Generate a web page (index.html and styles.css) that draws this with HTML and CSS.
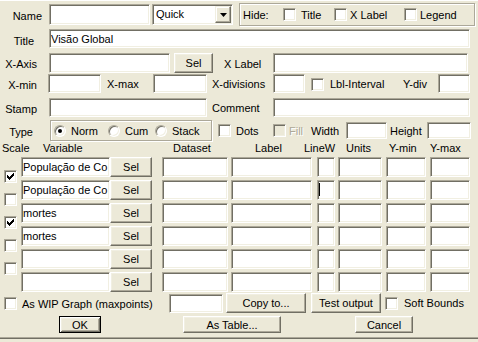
FILE: index.html
```html
<!DOCTYPE html>
<html lang="pt">
<head>
  <meta charset="UTF-8">
  <meta name="viewport" content="width=device-width, initial-scale=1.0">
  <title>Graph Settings</title>
  <link rel="stylesheet" href="styles.css">
</head>
<body>

  <div class="dialog">
    <div class="row row-name">
      <label class="lbl lbl-name">Name</label>
      <input class="field in-name" type="text">
      <div class="select">
        <span class="select-text">Quick</span>
        <span class="select-btn">
          <svg width="7" height="4" viewBox="0 0 7 4"><polygon points="0,0 7,0 3.5,4" fill="#000"/></svg>
        </span>
      </div>
      <div class="group hide-box">
        <span>Hide:</span>
        <span class="opt"><span class="chk"></span>Title</span>
        <span class="opt opt-tight"><span class="chk"></span>X Label</span>
        <span class="opt opt-tight"><span class="chk"></span>Legend</span>
      </div>
    </div>

    <div class="row row-title">
      <label class="lbl lbl-title">Title</label>
      <input class="field in-title" type="text" value="Visão Global">
    </div>

    <div class="row row-axis">
      <label class="lbl">X-Axis</label>
      <input class="field in-axis" type="text">
      <button class="btn btn-axis">Sel</button>
      <span class="txt t-xlabel">X Label</span>
      <input class="field in-xlabel" type="text">
    </div>

    <div class="row row-min">
      <label class="lbl lbl-min">X-min</label>
      <input class="field in-xmin" type="text">
      <span class="txt t-xmax">X-max</span>
      <input class="field in-xmax" type="text">
      <span class="txt t-xdiv">X-divisions</span>
      <input class="field in-xdiv" type="text">
      <span class="chk chk-lbl"></span>
      <span class="txt t-interval">Lbl-Interval</span>
      <span class="txt t-ydiv">Y-div</span>
      <input class="field in-ydiv" type="text">
    </div>

    <div class="row row-stamp">
      <label class="lbl">Stamp</label>
      <input class="field in-stamp" type="text">
      <span class="txt t-comment">Comment</span>
      <input class="field in-comment" type="text">
    </div>

    <div class="row row-type">
      <label class="lbl lbl-type">Type</label>
      <div class="group type-box">
        <span class="ropt r-norm"><span class="radio on"></span>Norm</span>
        <span class="ropt r-cum"><span class="radio"></span>Cum</span>
        <span class="ropt"><span class="radio"></span>Stack</span>
      </div>
      <span class="opt o-dots"><span class="chk"></span>Dots</span>
      <span class="opt o-fill disabled"><span class="chk"></span>Fill</span>
      <span class="txt t-width">Width</span>
      <input class="field in-width" type="text">
      <span class="txt t-height">Height</span>
      <input class="field in-height" type="text">
    </div>

    <div class="row row-head">
      <span class="h-scale">Scale</span>
      <span class="h-var">Variable</span>
      <span class="h-set">Dataset</span>
      <span class="h-lbl">Label</span>
      <span class="h-lw">LineW</span>
      <span class="h-units">Units</span>
      <span class="h-ymin">Y-min</span>
      <span>Y-max</span>
    </div>

    <div class="vars">
      <div class="row var-row">
        <span class="scale"><span class="chk"><svg width="7" height="7" viewBox="0 0 7 7"><polygon points="0,2 2,4 7,-1 7,2 2,7 0,5" fill="#000"/></svg></span></span>
        <input class="field c-var" type="text" value="População de Co">
        <button class="btn c-sel">Sel</button>
        <input class="field c-set" type="text">
        <input class="field c-label" type="text">
        <input class="field c-lw" type="text">
        <input class="field c-units" type="text">
        <input class="field c-ymin" type="text">
        <input class="field c-ymax" type="text">
      </div>
      <div class="row var-row">
        <span class="scale"><span class="chk"></span></span>
        <input class="field c-var" type="text" value="População de Co">
        <button class="btn c-sel">Sel</button>
        <input class="field c-set" type="text">
        <input class="field c-label" type="text">
        <input class="field c-lw has-caret" type="text">
        <input class="field c-units" type="text">
        <input class="field c-ymin" type="text">
        <input class="field c-ymax" type="text">
      </div>
      <div class="row var-row">
        <span class="scale"><span class="chk"><svg width="7" height="7" viewBox="0 0 7 7"><polygon points="0,2 2,4 7,-1 7,2 2,7 0,5" fill="#000"/></svg></span></span>
        <input class="field c-var" type="text" value="mortes">
        <button class="btn c-sel">Sel</button>
        <input class="field c-set" type="text">
        <input class="field c-label" type="text">
        <input class="field c-lw" type="text">
        <input class="field c-units" type="text">
        <input class="field c-ymin" type="text">
        <input class="field c-ymax" type="text">
      </div>
      <div class="row var-row">
        <span class="scale"><span class="chk"></span></span>
        <input class="field c-var" type="text" value="mortes">
        <button class="btn c-sel">Sel</button>
        <input class="field c-set" type="text">
        <input class="field c-label" type="text">
        <input class="field c-lw" type="text">
        <input class="field c-units" type="text">
        <input class="field c-ymin" type="text">
        <input class="field c-ymax" type="text">
      </div>
      <div class="row var-row">
        <span class="scale"><span class="chk"></span></span>
        <input class="field c-var" type="text">
        <button class="btn c-sel">Sel</button>
        <input class="field c-set" type="text">
        <input class="field c-label" type="text">
        <input class="field c-lw" type="text">
        <input class="field c-units" type="text">
        <input class="field c-ymin" type="text">
        <input class="field c-ymax" type="text">
      </div>
      <div class="row var-row">
        <span class="scale"></span>
        <input class="field c-var" type="text">
        <button class="btn c-sel">Sel</button>
        <input class="field c-set" type="text">
        <input class="field c-label" type="text">
        <input class="field c-lw" type="text">
        <input class="field c-units" type="text">
        <input class="field c-ymin" type="text">
        <input class="field c-ymax" type="text">
      </div>
    </div>

    <div class="row row-wip">
      <span class="chk chk-wip"></span>
      <span class="txt t-wip">As WIP Graph (maxpoints)</span>
      <input class="field in-wip" type="text">
      <button class="btn btn-copy">Copy to...</button>
      <button class="btn btn-test">Test output</button>
      <span class="opt o-soft"><span class="chk"></span>Soft Bounds</span>
    </div>

    <div class="row row-actions">
      <button class="btn btn-default btn-ok">OK</button>
      <button class="btn btn-table">As Table...</button>
      <button class="btn btn-cancel">Cancel</button>
    </div>
  </div>

</body>
</html>
```

FILE: styles.css
```css
html {
  font-size: 11px;
}

body {
  margin: 0;
  padding: 0;
  background-color: #ece9d8;
  font-family: "Liberation Sans", Arial, sans-serif;
  font-size: 11px;
  color: #000;
}

.dialog {
  width: 478px;
  height: 339px;
  box-sizing: border-box;
  border-top: 1px solid #fff;
  border-bottom: 1px solid #716f64;
  box-shadow: inset 0 -1px #aca899;
}

.row {
  display: flex;
  align-items: center;
}

/* rows, top to bottom */
.row-name { margin-top: 2px; height: 23px; }
.row-title { margin-top: 3px; height: 19px; }
.row-axis { margin-top: 5px; height: 20px; }
.row-min { margin-top: 1px; height: 19px; }
.row-stamp { margin-top: 5px; height: 19px; }
.row-type { margin-top: 3px; height: 21px; }
.row-head { margin-top: 1px; height: 12px; line-height: 12px; }
.row-wip { margin-top: 1px; height: 20px; }
.row-actions { margin-top: 3px; height: 17px; }

.vars {
  display: flex;
  flex-direction: column;
  gap: 3px;
  margin-top: 3px;
}

.var-row {
  height: 20px;
}

/* labels */
.lbl {
  flex: none;
  width: 49px;
  box-sizing: border-box;
  padding-right: 12px;
  padding-top: 2px;
  text-align: right;
}

.lbl-name { padding-right: 7px; }
.lbl-title { padding-right: 15px; padding-top: 4px; }
.lbl-type { padding-right: 16px; }
.lbl-min { width: 48px; padding-right: 11px; }

.txt {
  flex: none;
  box-sizing: border-box;
  white-space: nowrap;
  padding-top: 1px;
}

/* sunken edit field */
.field {
  flex: none;
  box-sizing: border-box;
  height: 100%;
  margin: 0;
  padding: 0 1px;
  border: 1px solid;
  border-color: #aca899 #fff #fff #aca899;
  box-shadow: inset 1px 1px #716f64, inset -1px -1px #f1efe2;
  background-color: #fff;
  font: inherit;
  color: #000;
  outline: none;
  border-radius: 0;
  appearance: none;
}

.has-caret {
  background: linear-gradient(#000, #000) no-repeat 1px 2px / 1px 13px, #fff;
}

/* raised push button */
.btn {
  flex: none;
  box-sizing: border-box;
  height: 100%;
  margin: 0;
  padding: 0;
  border: 1px solid;
  border-color: #fff #716f64 #716f64 #fff;
  box-shadow: inset -1px -1px #aca899, inset 1px 1px #f1efe2;
  background-color: #ece9d8;
  font: inherit;
  color: #000;
  border-radius: 0;
}

.btn-default {
  border-color: #000;
  box-shadow: inset 1px 1px #fff, inset -1px -1px #716f64, inset 2px 2px #f1efe2, inset -2px -2px #aca899;
}

/* check box and radio */
.chk {
  flex: none;
  display: flex;
  align-items: center;
  justify-content: center;
  box-sizing: border-box;
  width: 13px;
  height: 13px;
  border: 1px solid;
  border-color: #aca899 #fff #fff #aca899;
  box-shadow: inset 1px 1px #716f64, inset -1px -1px #f1efe2;
  background-color: #fff;
}

.chk svg {
  display: block;
  shape-rendering: crispEdges;
}

.radio {
  flex: none;
  display: flex;
  align-items: center;
  justify-content: center;
  box-sizing: border-box;
  width: 12px;
  height: 12px;
  border-radius: 50%;
  border: 1px solid;
  border-color: #aca899 #fff #fff #aca899;
  box-shadow: inset 1px 1px #716f64, inset -1px -1px #f1efe2;
  background-color: #fff;
}

.radio.on::after {
  content: "";
  width: 4px;
  height: 4px;
  border-radius: 50%;
  background-color: #000;
}

.opt,
.ropt {
  flex: none;
  display: flex;
  align-items: center;
  gap: 5px;
  white-space: nowrap;
}

.opt-tight { gap: 3px; }

.disabled { color: #aca899; text-shadow: 1px 1px #fff; }
.disabled .chk { background-color: #ece9d8; }

/* etched group boxes */
.group {
  flex: none;
  box-sizing: border-box;
  height: 100%;
  border: 1px solid #aca899;
  box-shadow: inset 1px 1px #fff, 1px 1px #fff;
}

.hide-box {
  display: grid;
  grid-template-columns: 40px 51px 70px auto;
  align-items: center;
  width: 236px;
  margin-left: 6px;
  padding-left: 3px;
}

.type-box {
  display: flex;
  align-items: center;
  width: 162px;
  margin-left: 1px;
  padding-left: 3px;
}

.r-norm { width: 54px; }
.r-cum { width: 47px; }

/* drop down */
.select {
  flex: none;
  display: flex;
  box-sizing: border-box;
  width: 81px;
  height: 21px;
  margin-left: 2px;
  border: 1px solid;
  border-color: #aca899 #fff #fff #aca899;
  box-shadow: inset 1px 1px #716f64, inset -1px -1px #f1efe2;
  background-color: #fff;
  padding: 1px;
}

.select-text {
  flex: 1;
  padding-left: 2px;
  line-height: 17px;
}

.select-btn {
  display: flex;
  align-items: center;
  justify-content: center;
  box-sizing: border-box;
  width: 16px;
  border: 1px solid;
  border-color: #f1efe2 #716f64 #716f64 #f1efe2;
  box-shadow: inset -1px -1px #aca899, inset 1px 1px #fff;
  background-color: #ece9d8;
}

/* top rows */
.in-name { width: 101px; height: 21px; margin-left: 0; }
.in-title { width: 421px; }
.in-axis { width: 121px; }
.btn-axis { width: 39px; margin-left: 4px; }
.t-xlabel { width: 60px; padding-left: 11px; }
.in-xlabel { width: 195px; }

.in-xmin { width: 53px; }
.t-xmax { width: 52px; padding-left: 6px; }
.in-xmax { width: 54px; }
.t-xdiv { width: 66px; padding-left: 5px; }
.in-xdiv { width: 32px; }
.chk-lbl { margin-left: 6px; margin-top: 2px; }
.t-interval { width: 79px; padding-left: 6px; }
.t-ydiv { width: 35px; }
.in-ydiv { width: 32px; }

.in-stamp { width: 158px; }
.t-comment { width: 66px; padding-left: 5px; }
.in-comment { width: 197px; }

.o-dots { width: 55px; margin-left: 6px; }
.o-fill { width: 38px; gap: 3px; }
.t-width { width: 35px; }
.in-width { width: 41px; height: 17px; }
.t-height { width: 40px; padding-left: 3px; }
.in-height { width: 44px; height: 17px; }

/* variable table */
.h-scale { width: 43px; padding-left: 2px; box-sizing: border-box; }
.h-var { width: 130px; }
.h-set { width: 82px; }
.h-lbl { width: 49px; }
.h-lw { width: 42px; }
.h-units { width: 43px; }
.h-ymin { width: 41px; }

.scale {
  flex: none;
  align-self: flex-start;
  width: 13px;
  height: 20px;
  margin-left: 4px;
}

.scale .chk { margin-top: 13px; }

.c-var { width: 89px; margin-left: 4px; }
.c-sel { width: 42px; }
.c-set { width: 66px; margin-left: 10px; }
.c-label { width: 81px; margin-left: 3px; }
.c-lw { width: 18px; margin-left: 5px; }
.c-units { width: 44px; margin-left: 3px; }
.c-ymin { width: 40px; margin-left: 4px; }
.c-ymax { width: 40px; margin-left: 4px; }

/* bottom */
.chk-wip { margin-left: 4px; }
.t-wip { width: 152px; padding-left: 5px; }
.in-wip { width: 54px; height: 19px; }
.btn-copy { width: 80px; margin-left: 3px; }
.btn-test { width: 70px; margin-left: 5px; }
.o-soft { margin-left: 4px; gap: 6px; }

.btn-ok { width: 42px; margin-left: 59px; }
.btn-table { width: 98px; margin-left: 82px; }
.btn-cancel { width: 58px; margin-left: 74px; }
```
